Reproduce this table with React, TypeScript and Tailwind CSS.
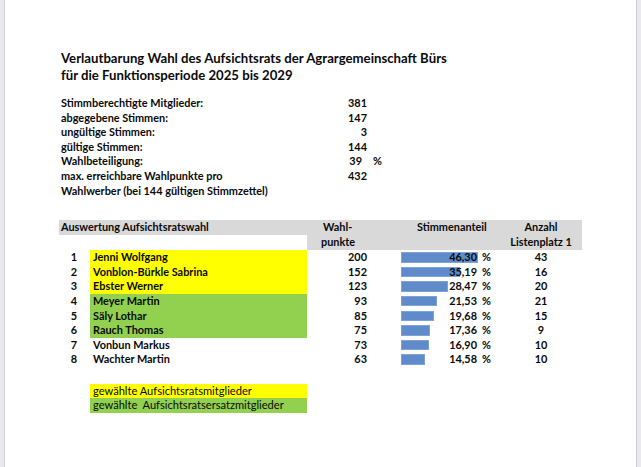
import React from "react";

const stats: [string, string, string?][] = [
  ["Stimmberechtigte Mitglieder:", "381"],
  ["abgegebene Stimmen:", "147"],
  ["ungültige Stimmen:", "3"],
  ["gültige Stimmen:", "144"],
  ["Wahlbeteiligung:", "39", "%"],
];

type Row = { n: number; name: string; pts: number; pct: number; pctText: string; a: number; color: "y" | "g" | "n" };

const rows: Row[] = [
  { n: 1, name: "Jenni Wolfgang", pts: 200, pct: 46.3, pctText: "46,30", a: 43, color: "y" },
  { n: 2, name: "Vonblon-Bürkle Sabrina", pts: 152, pct: 35.19, pctText: "35,19", a: 16, color: "y" },
  { n: 3, name: "Ebster Werner", pts: 123, pct: 28.47, pctText: "28,47", a: 20, color: "y" },
  { n: 4, name: "Meyer Martin", pts: 93, pct: 21.53, pctText: "21,53", a: 21, color: "g" },
  { n: 5, name: "Säly Lothar", pts: 85, pct: 19.68, pctText: "19,68", a: 15, color: "g" },
  { n: 6, name: "Rauch Thomas", pts: 75, pct: 17.36, pctText: "17,36", a: 9, color: "g" },
  { n: 7, name: "Vonbun Markus", pts: 73, pct: 16.9, pctText: "16,90", a: 10, color: "n" },
  { n: 8, name: "Wachter Martin", pts: 63, pct: 14.58, pctText: "14,58", a: 10, color: "n" },
];

const bgFor = (c: Row["color"]) =>
  c === "y" ? "bg-[#ffff00]" : c === "g" ? "bg-[#92d050]" : "bg-transparent";

export default function App() {
  return (
    <div className="w-[641px] h-[467px] bg-white flex text-[#0a0a0a] font-['Lato','Liberation_Sans',sans-serif] overflow-hidden">
      <div className="w-[5px] h-full bg-[#e9e9ee] border-r border-[#cfcfd6]" />
      <div className="flex-1 flex flex-col pt-[50px]">
        <div className="pl-[56px] font-bold text-[13.2px] leading-[17px]">
          <div>Verlautbarung Wahl des Aufsichtsrats der Agrargemeinschaft Bürs</div>
          <div>für die Funktionsperiode 2025 bis 2029</div>
        </div>

        <div className="pl-[56px] mt-[12px] font-bold text-[10.9px] leading-[14.6px]">
          {stats.map(([l, v, p]) => (
            <div key={l} className="grid grid-cols-[255px_51px_auto] h-[14.6px] items-center">
              <span>{l}</span>
              <span className={"text-right " + (p ? "pr-[5px]" : "")}>{v}</span>
              <span className="pl-[6px]">{p ?? ""}</span>
            </div>
          ))}
          <div className="grid grid-cols-[255px_51px_auto] items-start">
            <span>
              max. erreichbare Wahlpunkte pro
              <br />
              Wahlwerber (bei 144 gültigen Stimmzettel)
            </span>
            <span className="text-right">432</span>
            <span />
          </div>
        </div>

        <div className="ml-[54px] mt-[22px] w-[523px] font-bold text-[10.9px] leading-[14.6px]">
          <div className="grid grid-cols-[31px_217px_65px_128px_82px] h-[15px] items-center bg-[#d9d9d9]">
            <span className="col-span-2 pl-[2px]">Auswertung Aufsichtsratswahl</span>
            <span className="pl-[16px]">Wahl-</span>
            <span className="pl-[45px]">Stimmenanteil</span>
            <span className="text-center">Anzahl</span>
          </div>
          <div className="grid grid-cols-[31px_217px_65px_128px_82px] h-[15px] items-center">
            <span className="col-span-2 bg-white h-full" />
            <span className="pl-[14px] bg-[#d9d9d9] h-full flex items-center">punkte</span>
            <span className="bg-[#d9d9d9] h-full" />
            <span className="text-center bg-[#d9d9d9] h-full flex items-center justify-center">Listenplatz 1</span>
          </div>
          {rows.map((r) => (
            <div key={r.n} className="grid grid-cols-[31px_217px_65px_128px_82px] h-[14.6px] items-center">
              <span className="text-center pr-[1px]">{r.n}</span>
              <span className={"h-full flex items-center pl-[3px] " + bgFor(r.color)}>{r.name}</span>
              <span className="text-right pr-[5px]">{r.pts}</span>
              <div className="relative h-full flex items-center">
                <div
                  className="absolute left-[29px] top-[2px] h-[10.5px] bg-[#5f8bca] border border-[#7ea3d8]"
                  style={{ width: `${r.pct * 1.665}px` }}
                />
                <span className="relative w-[105px] text-right">{r.pctText}</span>
                <span className="relative ml-[5px]">%</span>
              </div>
              <span className="text-center">{r.a}</span>
            </div>
          ))}
        </div>

        <div className="ml-[85px] mt-[17px] w-[217px] text-[11.1px] leading-[14.6px] font-normal">
          <div className="bg-[#ffff00] h-[14.5px] flex items-center pl-[3px]">gewählte Aufsichtsratsmitglieder</div>
          <div className="bg-[#92d050] h-[14.5px] flex items-center pl-[3px] whitespace-pre">gewählte  Aufsichtsratsersatzmitglieder</div>
        </div>
      </div>
      <div className="w-[5px] h-full bg-[#e9e9ee] border-l border-[#cfcfd6]" />
    </div>
  );
}
